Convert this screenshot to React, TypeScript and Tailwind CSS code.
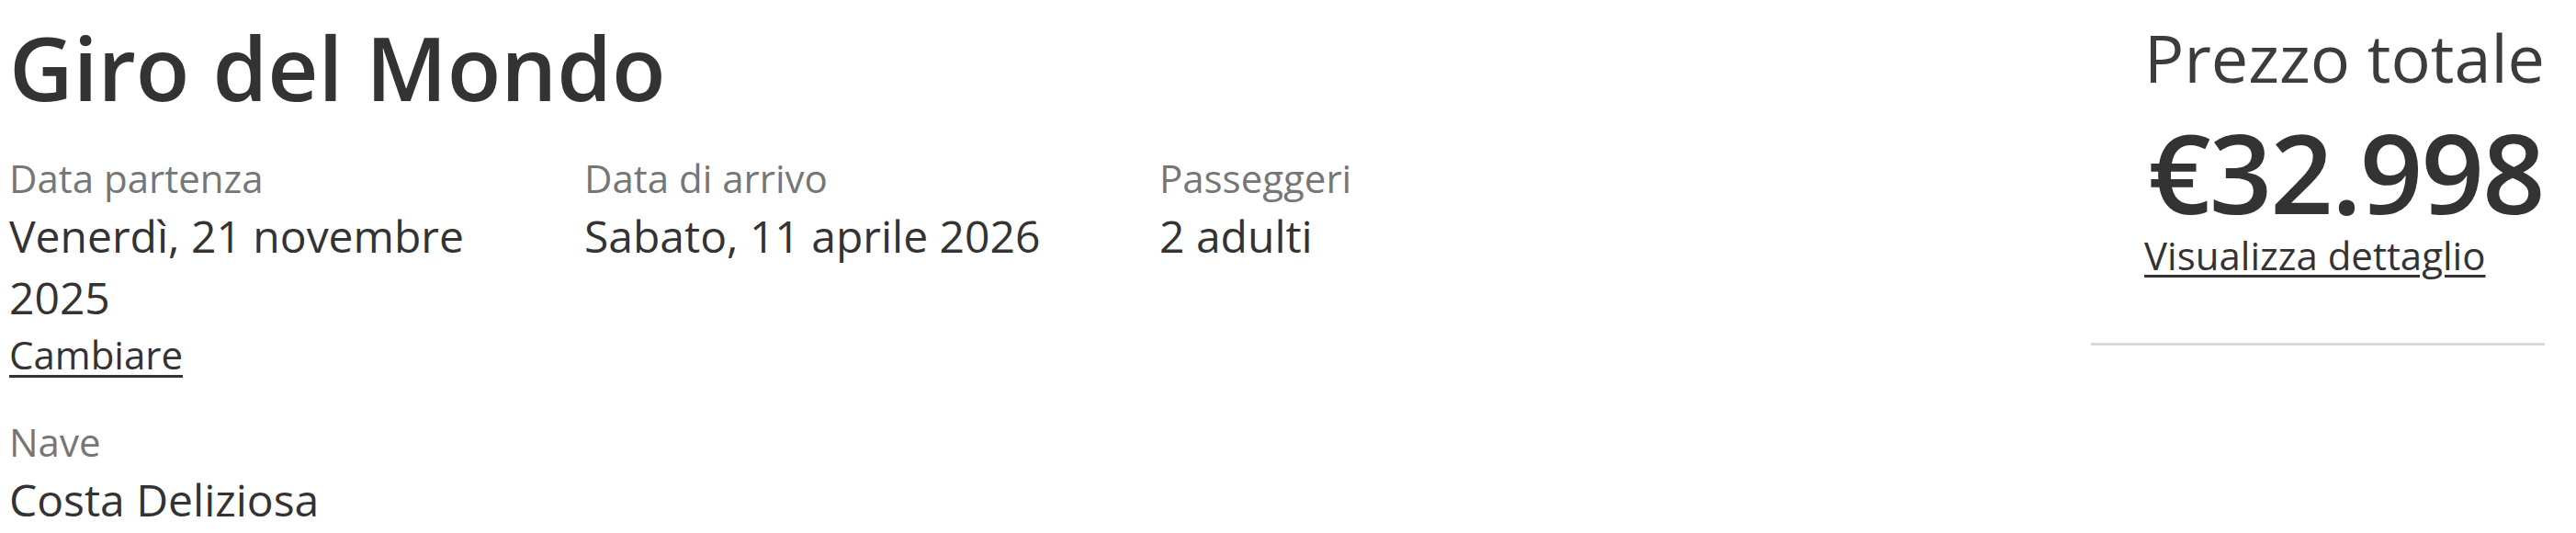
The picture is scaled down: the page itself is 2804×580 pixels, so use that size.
import React from "react";

function Field({ label, value, children }: { label: string; value: React.ReactNode; children?: React.ReactNode }) {
  return (
    <div className="flex flex-col">
      <div className="text-[42px] leading-[58px] text-[#767676]">{label}</div>
      <div className="text-[48px] leading-[67px] text-[#333333]">{value}</div>
      {children}
    </div>
  );
}

export default function App() {
  return (
    <div
      className="w-[2804px] h-[580px] bg-white flex justify-between pl-[10px] pr-[34px] overflow-hidden"
      style={{ fontFamily: '"Open Sans", "Noto Sans", sans-serif' }}
    >
      <div className="flex flex-col pt-[13px]">
        <h1 className="text-[96px] leading-[120px] font-semibold text-[#333333]">Giro del Mondo</h1>
        <div className="grid grid-cols-[626px_626px_600px] mt-[32px]">
          <div className="pr-[30px]">
            <Field label="Data partenza" value="Venerdì, 21 novembre 2025">
              <a href="#" className="text-[42px] leading-[58px] text-[#333333] underline decoration-[3px] underline-offset-[6px]">
                Cambiare
              </a>
            </Field>
          </div>
          <div className="pr-[30px]">
            <Field label="Data di arrivo" value="Sabato, 11 aprile 2026" />
          </div>
          <div className="pr-[30px]">
            <Field label="Passeggeri" value="2 adulti" />
          </div>
        </div>
        <div className="mt-[37px]">
          <Field label="Nave" value="Costa Deliziosa" />
        </div>
      </div>
      <div className="w-[494px] flex flex-col items-end pt-[13px]">
        <div className="flex flex-col items-start text-[#333333]">
          <div className="text-[72px] leading-[98px] text-[#3c3c3c]">Prezzo totale</div>
          <div className="mt-[16px] text-[120px] leading-[120px] font-semibold tracking-[-2px] pl-[4px]">€32.998</div>
          <a href="#" className="mt-[6px] text-[42px] leading-[50px] underline decoration-[3px] underline-offset-[5px] text-[#333333]">
            Visualizza dettaglio
          </a>
        </div>
        <div className="w-full h-[3px] bg-[#d9d9d9] mt-[70px]" />
      </div>
    </div>
  );
}
